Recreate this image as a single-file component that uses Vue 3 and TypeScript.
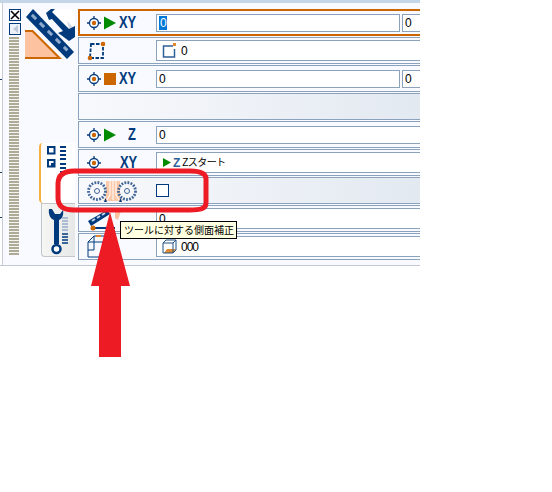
<template>
  <div class="page">
    <div class="panel">
      <div class="ticks">
        <i v-for="y in tickRows" :key="y" :style="{ top: y + 'px' }"></i>
      </div>
      <div class="side">
        <button class="close-btn">
          <svg width="10" height="10" viewBox="0 0 10 10"><path d="M1 1l8 8M9 1l-8 8" stroke="#000" stroke-width="1.6" /></svg>
        </button>
        <button class="pin-btn"><span></span></button>
        <div class="grip"></div>
      </div>

      <div class="tools">
        <svg class="logo" width="50" height="50" viewBox="0 0 50 50">
          <path d="M25 0h25v30z" fill="#fff" />
          <path d="M42 12l8 8v8h-4z" fill="#d5dce6" />
          <path d="M0 21h8l29 29H0z" fill="#fdc3a0" />
          <path d="M0 22h7.500l27 27H0" fill="none" stroke="#cc6600" stroke-width="2" />
          <path d="M8 0L1 8l41 42 7-7z" fill="#003a7d" />
          <path d="M21 4l5-4h4l-3 3 17 17 6-3v11l-6 4-8-6-3-2 5-2-11-12-3 1z" fill="#003a7d" />
          <g fill="#8fa9cc">
            <rect x="6" y="6.500" width="6" height="3" transform="rotate(45 9 8)" />
            <rect x="14" y="14.500" width="6" height="3" transform="rotate(45 17 16)" />
            <rect x="22" y="22.500" width="6" height="3" transform="rotate(45 25 24)" />
            <rect x="30" y="30.500" width="6" height="3" transform="rotate(45 33 32)" />
            <rect x="38" y="38.500" width="5" height="3" transform="rotate(45 41 40)" />
          </g>
        </svg>
        <div class="tabs">
          <div class="tab tab-active">
            <svg width="30" height="44" viewBox="0 0 30 44">
              <rect x="1" y="1" width="6.500" height="6.500" fill="#fff" stroke="#003a7d" stroke-width="2" />
              <rect x="1" y="14" width="6.500" height="6.500" fill="#fff" stroke="#003a7d" stroke-width="2" />
              <path d="M4 17h4v4H4z" fill="#003a7d" />
              <path d="M13 1h6M13 5h6M13 9h6M13 13h6M13 18h6M13 22h6M13 26h6" stroke="#003a7d" stroke-width="2" />
            </svg>
          </div>
          <div class="tab tab-tool">
            <svg width="30" height="50" viewBox="0 0 30 50">
              <path d="M2 3c-1 6 2 10 5 11v24h5V14c3-1 5-5 4-10l-3 4H8L5 3z" fill="#003a7d" />
              <circle cx="9.500" cy="43" r="4" fill="#fff" stroke="#003a7d" stroke-width="2.500" />
              <path d="M15 12h6M15 15h6M15 18h6M15 21h6M15 24h6" stroke="#a9bcd3" stroke-width="2" />
              <path d="M15 28h6M15 31h6M15 34h6M15 37h6" stroke="#003a7d" stroke-width="1.500" />
            </svg>
          </div>
        </div>
      </div>

      <div class="rows">
        <div class="row row-current">
          <div class="cell">
            <svg class="target" width="14" height="14" viewBox="0 0 14 14"><use href="#target-mark" /></svg>
            <svg class="play" width="14" height="14" viewBox="0 0 14 14"><path d="M1 0.500l12 6.500-12 6.500z" fill="#008a00" /></svg>
            <span class="axis">XY</span>
          </div>
          <div class="field f-wide"><span class="selected">0</span></div>
          <div class="field f-next">0</div>
        </div>

        <div class="row">
          <div class="cell">
            <svg width="20" height="20" viewBox="0 0 20 20">
              <path d="M4 3h12v14H3z" fill="none" stroke="#003a7d" stroke-width="1.800" stroke-dasharray="3.500 1.500" />
              <circle cx="16" cy="3" r="2.300" fill="#cc6600" />
              <circle cx="3" cy="17" r="2.300" fill="#cc6600" />
            </svg>
          </div>
          <div class="field f-tall f-full">
            <svg class="mini" width="15" height="15" viewBox="0 0 15 15">
              <path d="M11 3H1.500v11h11V6" fill="none" stroke="#2f5f98" stroke-width="1.500" />
              <rect x="11" y="0" width="3" height="3" fill="#e08a30" />
            </svg>
            0
          </div>
        </div>

        <div class="row">
          <div class="cell">
            <svg class="target" width="14" height="14" viewBox="0 0 14 14"><use href="#target-mark" /></svg>
            <span class="stop"></span>
            <span class="axis">XY</span>
          </div>
          <div class="field f-wide">0</div>
          <div class="field f-next">0</div>
        </div>

        <div class="row row-shaded"></div>

        <div class="row">
          <div class="cell">
            <svg class="target" width="14" height="14" viewBox="0 0 14 14"><use href="#target-mark" /></svg>
            <svg class="play" width="14" height="14" viewBox="0 0 14 14"><path d="M1 0.500l12 6.500-12 6.500z" fill="#008a00" /></svg>
            <span class="axis axis-z">Z</span>
          </div>
          <div class="field f-full">0</div>
        </div>

        <div class="row">
          <div class="cell">
            <svg class="target" width="14" height="14" viewBox="0 0 14 14"><use href="#target-mark" /></svg>
            <span class="spacer"></span>
            <span class="axis">XY</span>
          </div>
          <div class="field f-tall f-full">
            <svg class="start" width="10" height="9" viewBox="0 0 10 9"><path d="M1 0l8 4.500-8 4.500z" fill="#008a00" /></svg>
            <b class="start-z">Z</b>
            <span class="jp">Zスタート</span>
          </div>
        </div>

        <div class="row row-shaded">
          <div class="cell">
            <svg width="52" height="24" viewBox="0 0 52 24">
              <path d="M19 2h14v16l3 4H16l3-4z" fill="#fdc9a8" />
              <path d="M23 2v14l-3 5M26 2v19M29 2v14l3 5" fill="none" stroke="#fff" stroke-width="1" />
              <g fill="none" stroke="#3f6596">
                <circle cx="10" cy="12" r="8.500" stroke-width="2.800" stroke-dasharray="1.800 1.300" />
                <circle cx="10" cy="12" r="2.500" />
                <circle cx="40" cy="12" r="8.500" stroke-width="2.800" stroke-dasharray="1.800 1.300" />
                <circle cx="40" cy="12" r="2.500" />
              </g>
              <path d="M17 23l1.500-4 1.500 4zM32 23l1.500-4 1.500 4z" fill="#003a7d" />
            </svg>
          </div>
          <span class="check"></span>
        </div>

        <div class="row">
          <div class="cell">
            <svg width="36" height="24" viewBox="0 0 36 24">
              <path d="M1 14L20 3l3 4L4 19z" fill="#003a7d" />
              <path d="M5 14l3-2M10 11l3-2M15 8l3-2" stroke="#c8d6e8" stroke-width="2" />
              <path d="M8 21h20" stroke="#003a7d" stroke-width="2" />
              <circle cx="6" cy="21" r="2.500" fill="#cc6600" />
              <path d="M28 2l6 2-3 9-3-2z" fill="#fdc3a0" />
            </svg>
          </div>
          <div class="field f-tall f-full f-low">0</div>
        </div>

        <div class="row">
          <div class="cell">
            <svg width="24" height="24" viewBox="0 0 24 24">
              <path d="M1 7h15v15H1zM1 7l6-6h15v15l-6 6M16 7l6-6M7 1v14H1" fill="none" stroke="#003a7d" />
              <path d="M9 1h5" stroke="#e08a30" stroke-width="2" />
            </svg>
          </div>
          <div class="field f-tall f-full">
            <svg class="mini" width="15" height="15" viewBox="0 0 15 15">
              <path d="M2 14l3-4h9l-3 4z" fill="#e08a30" />
              <path d="M1 4h10v10H1zM1 4l3-3h10v10l-3 3M11 4l3-3" fill="none" stroke="#1f5288" />
            </svg>
            000
          </div>
        </div>
      </div>
    </div>

    <div class="tooltip">ツールに対する側面補正</div>

    <svg class="markup" width="552" height="492" viewBox="0 0 552 492">
      <path d="M74 171H190c10 0 16 2 16 8v24c0 6-6 7-16 7H74c-10 0-16-3-16-12v-14c0-9 6-13 16-13z" fill="none" stroke="#ed1c24" stroke-width="5" />
      <path d="M110 212L130 286H121V357H99V286H91z" fill="#ed1c24" />
    </svg>

    <svg width="0" height="0" class="defs">
      <defs>
        <g id="target-mark">
          <circle cx="7" cy="7" r="4.500" fill="#fff" stroke="#003a7d" stroke-width="1.300" />
          <path d="M7 0v3M7 11v3M0 7h3M11 7h3" stroke="#003a7d" stroke-width="1.300" />
          <circle cx="7" cy="7" r="2.200" fill="#cc6600" />
        </g>
      </defs>
    </svg>
  </div>
</template>

<script setup lang="ts">
// small dark marks on the window behind, at the left edge
const tickRows: number[] = [76, 169, 214]
</script>

<style>
html, body {
  margin: 0;
  background: #fff;
}
</style>

<style scoped>
.page {
  position: relative;
  width: 552px;
  height: 492px;
  overflow: hidden;
  background: #fff;
  font-family: "Liberation Sans", "Noto Sans CJK JP", sans-serif;
}

.panel {
  position: relative;
  display: flex;
  box-sizing: border-box;
  width: 420px;
  height: 266px;
  overflow: hidden;
  background: #f8faff;
  border-top: 3px solid #c5d6e8;
  border-bottom: 1px solid #c4c8d2;
  padding-left: 9px;
}

.ticks {
  position: absolute;
  left: 0;
  top: 0;
  bottom: 0;
  width: 2px;
  background: #fff;
  border-right: 1px solid #c8ccd6;
}

.ticks i {
  position: absolute;
  left: 0;
  width: 2px;
  height: 1px;
  background: #1d3f6e;
}

.side {
  display: flex;
  flex-direction: column;
  width: 12px;
  padding-top: 6px;
  margin-right: 4px;
}

.close-btn,
.pin-btn {
  display: flex;
  align-items: center;
  justify-content: center;
  box-sizing: border-box;
  width: 12px;
  height: 12px;
  padding: 0;
  background: #fff;
  border: 1px solid #003a7d;
}

.pin-btn {
  margin-top: 2px;
  background: #eef2f8;
}

.pin-btn span {
  display: block;
  width: 0;
  height: 0;
  border-style: solid;
  border-width: 4px 5px 4px 0;
  border-color: transparent #bcc8d8 transparent transparent;
}

.grip {
  width: 10px;
  height: 218px;
  margin-top: 2px;
  background: repeating-linear-gradient(to bottom, #aeaa98 0, #aeaa98 2px, #f4f4f0 2px, #f4f4f0 3px);
}

.tools {
  display: flex;
  flex-direction: column;
  width: 50px;
  padding-top: 6px;
  margin-right: 3px;
}

.logo {
  display: block;
}

.tabs {
  display: flex;
  flex-direction: column;
  align-items: flex-end;
  margin-top: 84px;
}

.tab {
  box-sizing: border-box;
}

.tab-active {
  width: 36px;
  height: 60px;
  padding: 3px 0 0 6px;
  background: #fff;
  border-left: 2px solid #f5b041;
  border-radius: 4px 0 0 4px;
}

.tab-tool {
  width: 34px;
  height: 54px;
  padding: 2px 0 0 5px;
  background: linear-gradient(to right, #f6f6f4, #e6e8e8);
  border: 1px solid #c2c6c8;
  border-right: 0;
  border-radius: 0 0 0 4px;
}

.tab svg {
  display: block;
}

.rows {
  display: flex;
  flex-direction: column;
  gap: 1px;
  flex: 1;
  min-width: 0;
  padding-top: 6px;
}

.row {
  display: flex;
  align-items: center;
  box-sizing: border-box;
  height: 27px;
  overflow: hidden;
  border: 1px solid #8aa2bc;
  border-right: 0;
}

.row-current {
  border: 2px solid #cc6600;
  border-right: 0;
}

.row-shaded {
  background: linear-gradient(to right, #f8f9fc, #e3e9f1);
}

.cell {
  display: flex;
  flex: none;
  align-items: center;
  box-sizing: border-box;
  width: 77px;
  padding-left: 8px;
  gap: 3px;
}

.row-current .cell {
  width: 76px;
  padding-left: 7px;
}

.cell svg {
  display: block;
  flex: none;
}

.cell .play {
  margin-left: -1px;
}

.stop {
  width: 12px;
  height: 12px;
  background: #cc6600;
}

.spacer {
  width: 14px;
}

.axis {
  display: inline-block;
  margin-left: -1px;
  color: #003a7d;
  font-size: 17px;
  font-weight: 700;
  line-height: 1;
  transform: scaleX(0.76);
  transform-origin: left center;
}

.stop + .axis {
  margin-left: 0;
}

.axis-z {
  margin-left: 8px;
}

.field {
  flex: none;
  box-sizing: border-box;
  height: 18px;
  padding-left: 2px;
  overflow: hidden;
  background: #fff;
  border: 1px solid #8aa2bc;
  color: #000;
  font-family: "Liberation Sans", "Noto Sans CJK JP", sans-serif;
  font-size: 12px;
  letter-spacing: -1px;
  line-height: 16px;
  white-space: nowrap;
}

.f-wide {
  width: 244px;
}

.f-next {
  width: 30px;
  margin-left: 2px;
}

.f-full {
  width: 280px;
}

.f-tall {
  display: flex;
  align-items: center;
  height: 21px;
  padding-left: 5px;
}

.f-low {
  padding-left: 2px;
}

.selected {
  display: inline-block;
  padding: 0 1px;
  background: #0078d7;
  color: #fff;
  line-height: 14px;
}

.mini {
  margin-right: 4px;
}

.start {
  margin-right: 0;
}

.start-z {
  margin: 0 3px 0 1px;
  color: #2f5f98;
  font-size: 12px;
}

.jp {
  font-size: 10px;
  letter-spacing: -0.6px;
}

.check {
  flex: none;
  box-sizing: border-box;
  width: 13px;
  height: 13px;
  background: #fff;
  border: 1px solid #003a7d;
}

.tooltip {
  position: absolute;
  left: 120px;
  top: 221px;
  box-sizing: border-box;
  width: 117px;
  height: 18px;
  padding-left: 3px;
  background: #ffffe1;
  border: 1px solid #000;
  color: #000;
  font-family: "Noto Sans CJK JP", sans-serif;
  font-size: 10px;
  line-height: 16px;
  white-space: nowrap;
}

.markup {
  position: absolute;
  left: 0;
  top: 0;
  pointer-events: none;
}

.defs {
  position: absolute;
}
</style>
